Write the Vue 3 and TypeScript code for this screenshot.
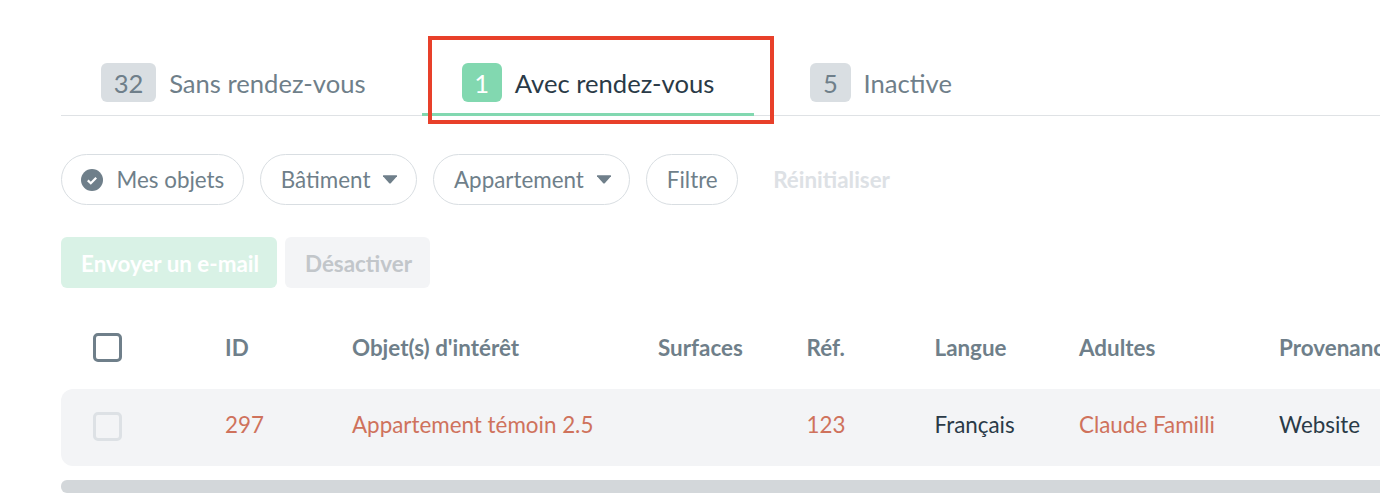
<script setup lang="ts">
interface Tab { count: number; label: string; active?: boolean }
const tabs: Tab[] = [
  { count: 32, label: 'Sans rendez-vous' },
  { count: 1, label: 'Avec rendez-vous', active: true },
  { count: 5, label: 'Inactive' },
]
const headers: string[] = ['ID', "Objet(s) d'intérêt", 'Surfaces', 'Réf.', 'Langue', 'Adultes', 'Provenance']
const cells: { text: string; link?: boolean }[] = [
  { text: '297', link: true },
  { text: 'Appartement témoin 2.5', link: true },
  { text: '' },
  { text: '123', link: true },
  { text: 'Français' },
  { text: 'Claude Familli', link: true },
  { text: 'Website' },
]
</script>

<template>
  <div class="page">
    <div class="highlight"></div>
    <nav class="tabs">
      <div v-for="t in tabs" :key="t.label" class="tab" :class="{ active: t.active }">
        <span class="badge">{{ t.count }}</span>
        <span class="tab-label">{{ t.label }}</span>
      </div>
    </nav>

    <div class="filters">
      <button class="chip check-chip">
        <svg class="check" width="22" height="22" viewBox="0 0 22 22">
          <circle cx="11" cy="11" r="11" fill="#6f7f8a" />
          <path d="M6.8 11.4l3 2.9 5.4-5.6" fill="none" stroke="#fff" stroke-width="2.2" />
        </svg>
        Mes objets
      </button>
      <button class="chip">
        Bâtiment
        <svg class="caret" width="16" height="9" viewBox="0 0 16 9"><path d="M1 1.2Q.6.2 1.6.2h12.8q1 0 .6 1L9 8q-1 1-2 0z" fill="#6f7f8a" /></svg>
      </button>
      <button class="chip">
        Appartement
        <svg class="caret" width="16" height="9" viewBox="0 0 16 9"><path d="M1 1.2Q.6.2 1.6.2h12.8q1 0 .6 1L9 8q-1 1-2 0z" fill="#6f7f8a" /></svg>
      </button>
      <button class="chip plain-chip">Filtre</button>
      <span class="reset">Réinitialiser</span>
    </div>

    <div class="actions">
      <button class="action primary">Envoyer un e-mail</button>
      <button class="action secondary">Désactiver</button>
    </div>

    <div class="table">
      <div class="grid head">
        <div class="box-cell"><span class="box"></span></div>
        <div v-for="h in headers" :key="h" class="cell">{{ h }}</div>
      </div>
      <div class="grid row">
        <div class="box-cell"><span class="box light"></span></div>
        <div v-for="(c, i) in cells" :key="i" class="cell" :class="{ link: c.link }">{{ c.text }}</div>
      </div>
    </div>
    <div class="scrollbar"></div>
  </div>
</template>

<style>
html, body { margin: 0; overflow: hidden; background: #fff; }
</style>

<style scoped>
.page {
  position: relative;
  width: 1380px;
  height: 504px;
  overflow: hidden;
  box-sizing: border-box;
  padding: 63px 0 0 61px;
  font-family: Lato, "Liberation Sans", sans-serif;
  background: #fff;
}
.highlight {
  position: absolute;
  left: 428px;
  top: 36px;
  width: 346px;
  height: 88px;
  box-sizing: border-box;
  border: 4px solid #e8402a;
  pointer-events: none;
}
.tabs {
  display: flex;
  gap: 16px;
  height: 53px;
  box-sizing: border-box;
  border-bottom: 1px solid #dfe2e5;
}
.tab {
  display: flex;
  align-items: flex-start;
  gap: 13px;
  height: 53px;
  box-sizing: border-box;
  padding: 0 40px;
  font-size: 25.6px;
  color: #6f7f8a;
}
.tab.active {
  border-bottom: 3px solid #82d8b0;
  color: #2a3a47;
}
.badge {
  display: flex;
  align-items: center;
  justify-content: center;
  height: 39px;
  padding: 0 12.72px;
  border-radius: 6px;
  background: #d9dee2;
  color: #6f7f8a;
}
.active .badge {
  background: #82d8b0;
  color: #fff;
}
.tab-label {
  line-height: 41px;
}
.filters {
  display: flex;
  align-items: center;
  gap: 16px;
  margin-top: 38px;
}
.chip {
  display: flex;
  align-items: center;
  gap: 12px;
  height: 51px;
  box-sizing: border-box;
  padding: 0 20px;
  border: 1px solid #d9dee2;
  border-radius: 26px;
  background: #fff;
  font: inherit;
  font-size: 22.4px;
  color: #6f7f8a;
}
.caret {
  margin-right: -2.5px;
}
.check-chip {
  gap: 13.5px;
  padding: 0 18.5px 0 19px;
}
.plain-chip {
  padding: 0 19.5px;
}
.reset {
  margin-left: 19px;
  font-size: 22.4px;
  font-weight: 700;
  color: #dde1e5;
}
.actions {
  display: flex;
  gap: 8px;
  margin-top: 32px;
}
.action {
  height: 51px;
  box-sizing: border-box;
  padding: 2px 18px 0 20px;
  border: 0;
  border-radius: 6px;
  font: inherit;
  font-size: 22.4px;
  font-weight: 700;
}
.primary {
  background: #d9f2e6;
  color: #fff;
}
.secondary {
  background: #f3f4f6;
  color: #c2c6ca;
}
.table {
  width: 1500px;
  margin-top: 27px;
}
.grid {
  display: grid;
  grid-template-columns: 164px 127px 306px 148.5px 128px 144.5px 200px 282px;
  align-items: center;
}
.head {
  height: 64px;
  margin-bottom: 10px;
  font-size: 22.4px;
  font-weight: 700;
  color: #6f7f8a;
}
.row {
  height: 77px;
  box-sizing: border-box;
  padding-bottom: 2px;
  border-radius: 12px 0 0 12px;
  background: #f3f4f6;
  font-size: 22.4px;
  color: #2a3a47;
}
.row .cell {
  padding-bottom: 4px;
}
.box-cell {
  display: flex;
  padding-left: 32px;
}
.box {
  display: block;
  width: 29px;
  height: 29px;
  box-sizing: border-box;
  border: 3px solid #6f7f8a;
  border-radius: 5px;
  background: #fff;
}
.box.light {
  border-color: #dde1e5;
  background: #f3f4f6;
}
.cell {
  white-space: nowrap;
}
.link {
  color: #cf725c;
}
.scrollbar {
  height: 13px;
  margin-top: 14px;
  width: 1400px;
  border-radius: 6px;
  background: #d3d7da;
}
</style>
